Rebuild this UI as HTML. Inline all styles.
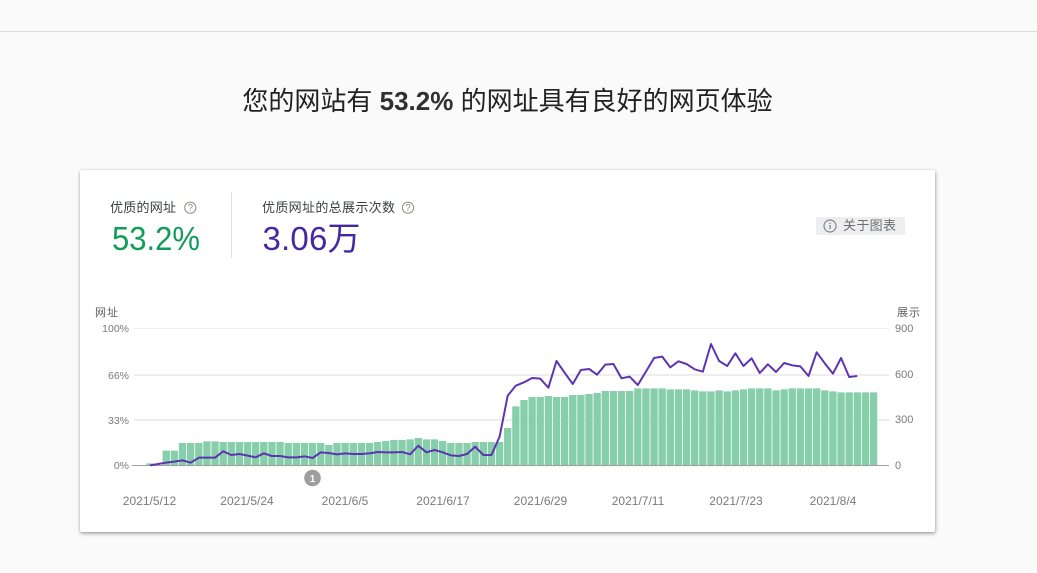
<!DOCTYPE html>
<html lang="zh-CN"><head><meta charset="utf-8"><title>网页体验</title>
<style>
html,body{margin:0;padding:0;width:1037px;height:573px;overflow:hidden;background:#fafafa}
body{position:relative;font-family:"Liberation Sans","Noto Sans CJK SC",sans-serif}
.top{position:absolute;left:0;top:31px;width:1037px;height:1px;background:#dcdcdc}
.card{position:absolute;left:80px;top:170px;width:855px;height:362px;background:#fff;border-radius:2px;box-shadow:0 1px 3px rgba(0,0,0,.3),1px 2px 4px rgba(0,0,0,.15)}
h1{position:absolute;left:-11px;top:83px;width:1037px;margin:0;text-align:center;font-size:26px;line-height:36px;font-weight:400;color:#212121;white-space:nowrap}
h1 b{font-weight:700;color:#303030;font-size:26px}
svg{position:absolute;left:0;top:0}
text{font-family:"Liberation Sans","Noto Sans CJK SC",sans-serif}
</style></head><body>
<div class="top"></div>
<h1>您的网站有 <b>53.2%</b> 的网址具有良好的网页体验</h1>
<div class="card"></div>
<svg width="1037" height="573" viewBox="0 0 1037 573">
<rect x="231" y="192" width="1" height="66" fill="#e0e0e0"/>
<text x="110" y="212" font-size="13" fill="#3c4043" textLength="66">优质的网址</text>
<circle cx="190.3" cy="207.7" r="5.6" fill="none" stroke="#8f8f86" stroke-width="1"/>
<text x="190.3" y="211.2" font-size="10" fill="#8f8f86" text-anchor="middle">?</text>
<text x="112" y="250" font-size="33" fill="#0f9d58" textLength="88" lengthAdjust="spacingAndGlyphs">53.2%</text>
<text x="262" y="212" font-size="13" fill="#3c4043" textLength="133">优质网址的总展示次数</text>
<circle cx="408" cy="207.7" r="5.6" fill="none" stroke="#8f8f86" stroke-width="1"/>
<text x="408" y="211.2" font-size="10" fill="#8f8f86" text-anchor="middle">?</text>
<text x="262.5" y="250" font-size="33" fill="#4527a0" textLength="98">3.06万</text>
<rect x="816" y="217" width="89" height="18" rx="2" fill="#eeeeee"/>
<circle cx="830" cy="226" r="6" fill="none" stroke="#7d8590" stroke-width="1.2"/>
<rect x="829.4" y="225" width="1.3" height="4" fill="#7d8590"/><rect x="829.4" y="222.6" width="1.3" height="1.3" fill="#7d8590"/>
<text x="843" y="230" font-size="13" fill="#6b6f73" textLength="53">关于图表</text>
<g fill="#eeeeee">
<rect x="134" y="328" width="755" height="1"/>
<rect x="134" y="374" width="755" height="2"/>
<rect x="134" y="419" width="755" height="2"/>
</g>
<g transform="translate(150,320) scale(8.13,.33333)">
<path fill="#87ceab" d="M.55 430h.9V435h-.9zM2.55 392h.9V435h-.9zM3.55 392h.9V435h-.9zM4.55 369h.9V435h-.9zM5.55 369h.9V435h-.9zM6.55 369h.9V435h-.9zM7.55 364h.9V435h-.9zM8.55 364h.9V435h-.9zM9.55 366h.9V435h-.9zM10.55 366h.9V435h-.9zM11.55 366h.9V435h-.9zM12.55 366h.9V435h-.9zM13.55 366h.9V435h-.9zM14.55 366h.9V435h-.9zM15.55 366h.9V435h-.9zM16.55 366h.9V435h-.9zM17.55 369h.9V435h-.9zM18.55 369h.9V435h-.9zM19.55 369h.9V435h-.9zM20.55 369h.9V435h-.9zM21.55 369h.9V435h-.9zM22.55 375h.9V435h-.9zM23.55 369h.9V435h-.9zM24.55 369h.9V435h-.9zM25.55 369h.9V435h-.9zM26.55 369h.9V435h-.9zM27.55 369h.9V435h-.9zM28.55 366h.9V435h-.9zM29.55 363h.9V435h-.9zM30.55 360h.9V435h-.9zM31.55 360h.9V435h-.9zM32.55 358h.9V435h-.9zM33.55 354h.9V435h-.9zM34.55 358h.9V435h-.9zM35.55 358h.9V435h-.9zM36.55 363h.9V435h-.9zM37.55 369h.9V435h-.9zM38.55 369h.9V435h-.9zM39.55 369h.9V435h-.9zM40.55 366h.9V435h-.9zM41.55 366h.9V435h-.9zM42.55 366h.9V435h-.9zM43.55 366h.9V435h-.9zM44.55 324h.9V435h-.9zM45.55 259h.9V435h-.9zM46.55 240h.9V435h-.9zM47.55 231h.9V435h-.9zM48.55 231h.9V435h-.9zM49.55 228h.9V435h-.9zM50.55 231h.9V435h-.9zM51.55 231h.9V435h-.9zM52.55 225h.9V435h-.9zM53.55 225h.9V435h-.9zM54.55 222h.9V435h-.9zM55.55 219h.9V435h-.9zM56.55 213h.9V435h-.9zM57.55 213h.9V435h-.9zM58.55 213h.9V435h-.9zM59.55 213h.9V435h-.9zM60.55 205h.9V435h-.9zM61.55 205h.9V435h-.9zM62.55 205h.9V435h-.9zM63.55 205h.9V435h-.9zM64.55 208h.9V435h-.9zM65.55 208h.9V435h-.9zM66.55 208h.9V435h-.9zM67.55 211h.9V435h-.9zM68.55 214h.9V435h-.9zM69.55 214h.9V435h-.9zM70.55 211h.9V435h-.9zM71.55 214h.9V435h-.9zM72.55 211h.9V435h-.9zM73.55 208h.9V435h-.9zM74.55 205h.9V435h-.9zM75.55 205h.9V435h-.9zM76.55 205h.9V435h-.9zM77.55 211h.9V435h-.9zM78.55 208h.9V435h-.9zM79.55 205h.9V435h-.9zM80.55 205h.9V435h-.9zM81.55 205h.9V435h-.9zM82.55 205h.9V435h-.9zM83.55 211h.9V435h-.9zM84.55 214h.9V435h-.9zM85.55 217h.9V435h-.9zM86.55 217h.9V435h-.9zM87.55 217h.9V435h-.9zM88.55 217h.9V435h-.9zM89.55 217h.9V435h-.9z" transform="translate(-1,0)"/>
</g>
<rect x="132" y="465" width="757" height="1" fill="#9e9e9e"/>
<g transform="translate(150,320) scale(8.13,.33333)">
<polyline fill="none" stroke="#5e35b1" stroke-width="2" stroke-linejoin="round" vector-effect="non-scaling-stroke" points="0,436 1,432 2,428 3,425 4,421 5,428 6,413 7,413 8,413 9,394 10,405 11,402 12,407 13,412 14,400 15,408 16,408 17,412 18,412 19,409 20,414 21,397 22,399 23,403 24,400 25,402 26,402 27,400 28,396 29,397 30,397 31,396 32,403 33,377 34,397 35,390 36,397 37,406 38,408 39,402 40,380 41,405 42,405 43,350 44,227 45,197 46,187 47,174 48,176 49,203 50,123 51,158 52,192 53,150 54,147 55,164 56,134 57,132 58,175 59,170 60,195 61,155 62,114 63,110 64,142 65,124 66,132 67,148 68,155 69,72 70,123 71,138 72,100 73,138 74,115 75,159 76,133 77,156 78,129 79,136 80,139 81,168 82,97 83,130 84,161 85,114 86,171 87,168"/>
</g>
<g font-size="11" fill="#7a7a7a">
<text x="95" y="316" fill="#5f5f5f" textLength="23">网址</text>
<text x="897" y="316" fill="#5f5f5f" textLength="23">展示</text>
<g text-anchor="end" font-size="10.5">
<text x="129" y="332">100%</text><text x="129" y="379">66%</text><text x="129" y="424">33%</text><text x="129" y="469">0%</text>
</g>
<text x="895" y="332">900</text><text x="895" y="378">600</text><text x="895" y="423">300</text><text x="895" y="469">0</text>
<g text-anchor="middle" font-size="12">
<text x="149.5" y="505">2021/5/12</text><text x="247" y="505">2021/5/24</text><text x="345" y="505">2021/6/5</text><text x="443" y="505">2021/6/17</text><text x="540.5" y="505">2021/6/29</text><text x="638" y="505">2021/7/11</text><text x="736" y="505">2021/7/23</text><text x="833" y="505">2021/8/4</text>
</g>
</g>
<circle cx="312.5" cy="478" r="8.3" fill="#9e9e9e"/>
<text x="312.5" y="482" font-size="10" font-weight="700" fill="#fff" text-anchor="middle">1</text>
</svg>
</body></html>
